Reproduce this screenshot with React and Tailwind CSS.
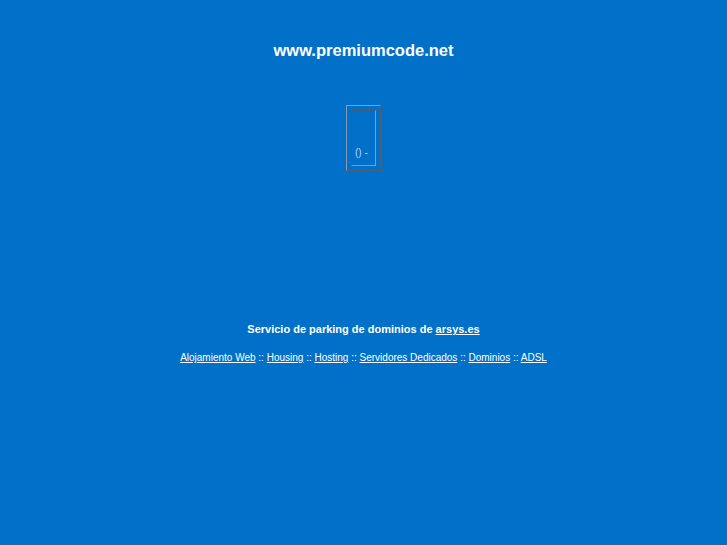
export default function App() {
  const f = { fontFamily: '"Liberation Sans", Arial, sans-serif' };
  return (
    <div className="min-h-[545px] w-full bg-[#0070c9] text-white flex flex-col items-center" style={f}>
      <div className="mt-[40px] text-[16.5px] font-bold leading-[20px]">www.premiumcode.net</div>
      <div className="mt-[45px] border border-[#8a9ab0] p-[4px] border-r-[#506070] border-b-[#506070]">
        <div className="w-[25px] h-[56px] border border-[#4a5a6e] border-r-[#8a9ab0] border-b-[#8a9ab0] flex items-end pb-[6px] pl-[3px]">
          <span className="text-[10px] leading-[12px] text-[#bcd4ee]">() -</span>
        </div>
      </div>
      <div className="mt-[151px] text-[11px] font-bold leading-[14px]">
        Servicio de parking de dominios de <a className="underline" href="#">arsys.es </a>
      </div>
      <div className="mt-[15px] text-[10px] leading-[14px]">
        <a className="underline" href="#">Alojamiento Web</a> :: <a className="underline" href="#">Housing</a> :: <a className="underline" href="#">Hosting</a> :: <a className="underline" href="#">Servidores Dedicados</a> :: <a className="underline" href="#">Dominios</a> :: <a className="underline" href="#">ADSL</a>
      </div>
    </div>
  );
}
